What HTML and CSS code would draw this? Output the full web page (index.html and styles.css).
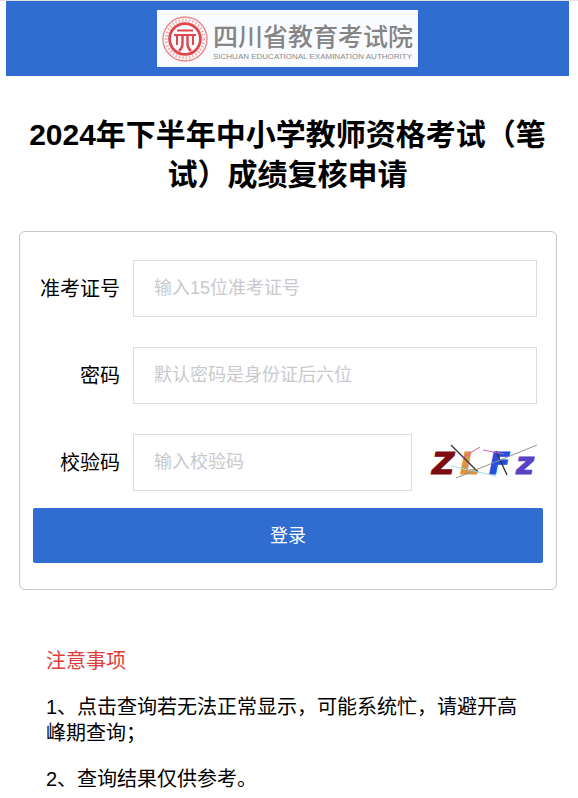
FILE: index.html
```html
<!DOCTYPE html>
<html lang="zh-CN">

<head>
    <meta charset="UTF-8">
    <meta name="viewport" content="width=device-width, initial-scale=1.0">
    <title>成绩复核申请</title>
    <link rel="stylesheet" href="styles.css">
</head>

<body>
    <div class="page">
        <header class="header">
            <svg class="logo" viewBox="0 0 261 57" role="img" aria-label="四川省教育考试院">
                <rect width="261" height="57" fill="#f9fbfe" />
                <!-- emblem -->
                <g fill="none" stroke="#e0474d">
                    <circle cx="28" cy="29" r="22" stroke="#e88a8e" stroke-width="1.4" />
                    <circle cx="28" cy="29" r="18.8" stroke="#f0b4b6" stroke-width="3" stroke-dasharray="1.6 1.8" />
                    <circle cx="28" cy="29" r="15.4" stroke-width="2.8" />
                    <path d="M20 20.500H36" stroke-width="2" />
                    <path d="M17 25H39" stroke-width="2" />
                    <path d="M20 25V35M36 25V35" stroke-width="2" />
                    <path d="M25.500 25V34Q25.500 38 22 41M30.500 25V34Q30.500 38 34 41" stroke-width="2.400" />
                </g>
                <text class="logo-name" x="56" y="36">四川省教育考试院</text>
                <text class="logo-sub" x="56" y="49">SICHUAN EDUCATIONAL EXAMINATION AUTHORITY</text>
            </svg>
        </header>

        <h1 class="title">2024年下半年中小学教师资格考试（笔试）成绩复核申请</h1>

        <form class="card">
            <div class="row">
                <label for="ticket">准考证号</label>
                <input type="text" id="ticket" placeholder="输入15位准考证号">
            </div>
            <div class="row">
                <label for="password">密码</label>
                <input type="password" id="password" placeholder="默认密码是身份证后六位">
            </div>
            <div class="row">
                <label for="code">校验码</label>
                <input type="text" id="code" placeholder="输入校验码">
                <svg class="captcha" viewBox="0 0 106 40" role="img" aria-label="校验码">
                    <g class="captcha-text">
                        <text x="1" y="31" fill="#7d0c10" stroke="#7d0c10">Z</text>
                        <text x="29" y="31" fill="#de9440" stroke="#de9440">L</text>
                        <text x="58" y="31" fill="#2450e0" stroke="#2450e0">F</text>
                        <text x="85" y="31" fill="#5741c4" stroke="#5741c4">z</text>
                    </g>
                    <g fill="none">
                        <path d="M20 2L47 29" stroke="#333" stroke-width="1.300" />
                        <path d="M65 8L76 32" stroke="#333" stroke-width="1.300" />
                        <path d="M25 35L106 2" stroke="#8f9490" />
                        <path d="M31 15L49 4M52 7L73 11" stroke="#d75cb4" />
                        <path d="M20 23L65 33" stroke="#9adce0" />
                    </g>
                </svg>
            </div>
            <button type="submit" class="login">登录</button>
        </form>

        <section class="notes">
            <p class="notes-title">注意事项</p>
            <p>1、点击查询若无法正常显示，可能系统忙，请避开高峰期查询；</p>
            <p>2、查询结果仅供参考。</p>
        </section>
    </div>
</body>

</html>
```
FILE: styles.css
```css
:root {
    --blue: #306dd0;
    --red: #e23c39;
    --line: #dcdcdc;
}

* {
    box-sizing: border-box;
}

body {
    margin: 0;
    border-top: 1px solid #e2e2e2;
    background: #fff;
    color: #000;
    font-family: "Liberation Sans", Arial, "Noto Sans CJK SC", sans-serif;
    font-size: 20px;
    line-height: 26px;
}

.page {
    margin: 0 9px 0 6px;
}

.header {
    display: flex;
    justify-content: center;
    padding: 9px;
    background: var(--blue);
}

.logo {
    width: 261px;
    height: 57px;
}

.logo-name {
    font-size: 25px;
    font-weight: 500;
    fill: #858585;
}

.logo-sub {
    font-size: 8px;
    fill: #8c8c8c;
}

.title {
    margin: 39px 12px 36px;
    font-size: 30px;
    line-height: 40px;
    text-align: center;
}

.card {
    margin: 0 12px 0 13px;
    padding: 28px 13px 26px;
    border: 1px solid #c8c8c8;
    border-radius: 6px;
}

.row {
    display: flex;
    align-items: center;
    margin-bottom: 30px;
    padding-right: 6px;
}

.row label {
    width: 87px;
    margin-right: 13px;
    text-align: right;
}

.row input {
    flex: 1;
    min-width: 0;
    height: 57px;
    padding: 0 20px;
    border: 1px solid var(--line);
    background: #fff;
    font-family: inherit;
    font-size: 18px;
    outline: none;
}

.row input::placeholder {
    color: #c8c9cc;
}

.captcha {
    width: 106px;
    height: 40px;
    margin-left: 19px;
    overflow: visible;
}

.captcha-text {
    font-family: "DejaVu Sans", sans-serif;
    font-size: 31px;
    font-weight: bold;
    font-style: italic;
    stroke-width: 1px;
}

.login {
    display: block;
    width: 100%;
    height: 55px;
    margin-top: -13px;
    padding: 0 0 4px;
    border: none;
    border-radius: 2px;
    background: var(--blue);
    color: #fff;
    font-family: inherit;
    font-size: 18px;
    cursor: pointer;
}

.notes {
    padding: 58px 40px 0;
}

.notes p {
    margin: 0 0 20px;
}

.notes .notes-title {
    color: var(--red);
}
```
